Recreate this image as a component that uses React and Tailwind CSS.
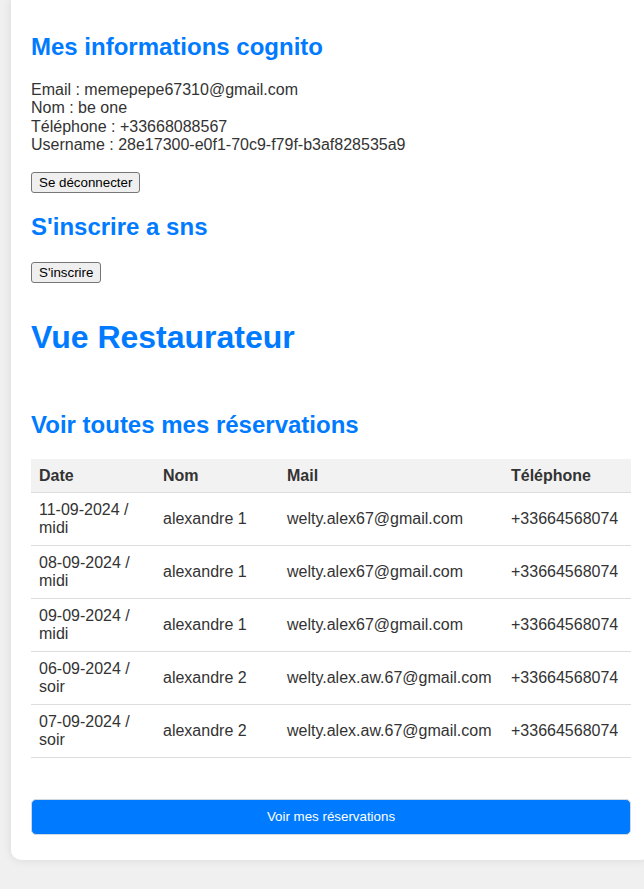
import React from 'react';

const reservations = [
    { date: '11-09-2024 /', slot: 'midi', nom: 'alexandre 1', mail: 'welty.alex67@gmail.com', tel: '+33664568074' },
    { date: '08-09-2024 /', slot: 'midi', nom: 'alexandre 1', mail: 'welty.alex67@gmail.com', tel: '+33664568074' },
    { date: '09-09-2024 /', slot: 'midi', nom: 'alexandre 1', mail: 'welty.alex67@gmail.com', tel: '+33664568074' },
    { date: '06-09-2024 /', slot: 'soir', nom: 'alexandre 2', mail: 'welty.alex.aw.67@gmail.com', tel: '+33664568074' },
    { date: '07-09-2024 /', slot: 'soir', nom: 'alexandre 2', mail: 'welty.alex.aw.67@gmail.com', tel: '+33664568074' },
];

const nativeBtn = 'block px-[7px] py-[2px] text-[13.33px] leading-[15.33px] text-black bg-[#efefef] border border-[#767676] rounded-[3px] font-["Liberation_Sans",Arial,sans-serif]';

export default function App() {
    return (
        <div className="min-h-[889px] bg-[#f0f0f0] overflow-hidden font-['Liberation_Sans',Arial,sans-serif] text-[#333]">
            <div className="ml-[11px] w-[640px] bg-white rounded-b-[10px] shadow-[0_0_10px_rgba(0,0,0,0.1)] px-5 pb-[25px]">
                {/* Cognito */}
                <h2 className="pt-[33px] text-[24px] leading-[28px] font-bold text-[#007bff]">Mes informations cognito</h2>
                <div className="mt-[20px] text-[16px] leading-[18.4px]">
                    <div>Email : memepepe67310@gmail.com</div>
                    <div>Nom : be one</div>
                    <div>Téléphone : +33668088567</div>
                    <div>Username : 28e17300-e0f1-70c9-f79f-b3af828535a9</div>
                </div>
                <button className={`${nativeBtn} mt-[17px]`}>Se déconnecter</button>

                {/* SNS */}
                <h2 className="mt-[20px] text-[24px] leading-[28px] font-bold text-[#007bff]">S'inscrire a sns</h2>
                <button className={`${nativeBtn} mt-[21px]`}>S'inscrire</button>

                <h1 className="mt-[36px] text-[32px] leading-[37px] font-bold text-[#007bff]">Vue Restaurateur</h1>

                <h2 className="mt-[55px] text-[24px] leading-[28px] font-bold text-[#007bff]">Voir toutes mes réservations</h2>

                <table className="mt-[20px] w-[600px] border-collapse text-[16px] leading-[18px] text-left">
                    <thead>
                        <tr className="bg-[#f2f2f2] border-b border-[#ddd]">
                            <th className="w-[124px] px-2 pt-2 pb-[7px] font-bold">Date</th>
                            <th className="w-[124px] px-2 pt-2 pb-[7px] font-bold">Nom</th>
                            <th className="w-[224px] px-2 pt-2 pb-[7px] font-bold">Mail</th>
                            <th className="w-[128px] px-2 pt-2 pb-[7px] font-bold">Téléphone</th>
                        </tr>
                    </thead>
                    <tbody>
                        {reservations.map((r, i) => (
                            <tr key={i} className="border-b border-[#ddd]">
                                <td className="p-2">{r.date}<br />{r.slot}</td>
                                <td className="p-2">{r.nom}</td>
                                <td className="p-2">{r.mail}</td>
                                <td className="p-2">{r.tel}</td>
                            </tr>
                        ))}
                    </tbody>
                </table>

                <button className="mt-[41px] w-[600px] h-[36px] bg-[#007bff] text-white text-[13.33px] rounded-[5px] border border-[#d0d8e0]">
                    Voir mes réservations
                </button>
            </div>
        </div>
    );
}
